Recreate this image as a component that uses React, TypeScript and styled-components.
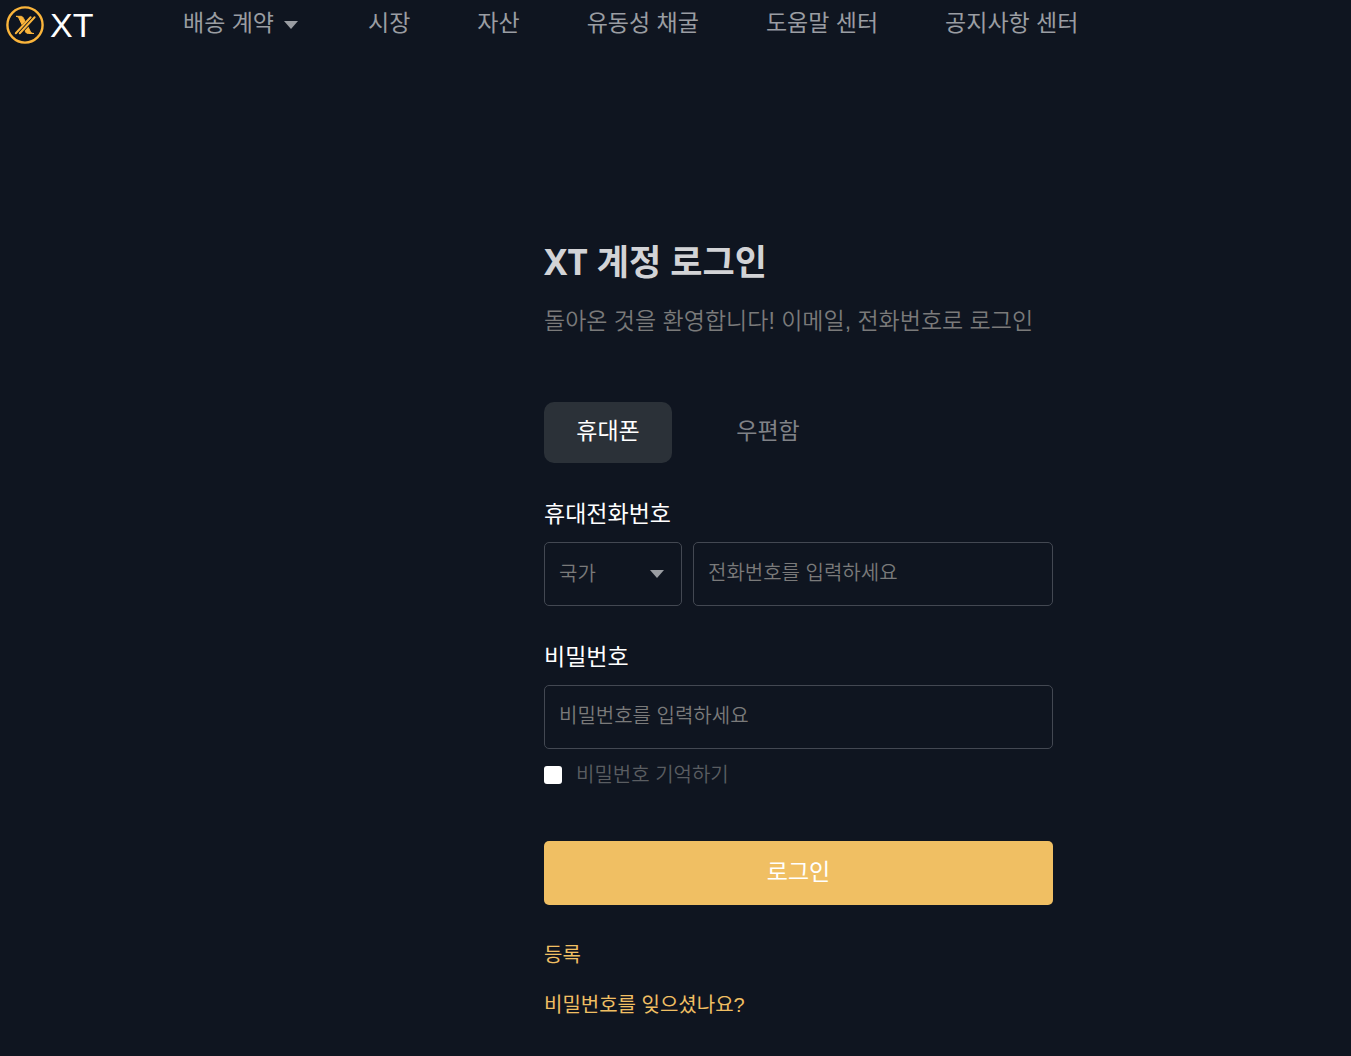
import React from "react";
import styled, { createGlobalStyle } from "styled-components";

const colors = {
  page: "#0f1520",
  gold: "#f0bf63",
  nav: "#9a9da2",
  muted: "#7a7a7a",
  dim: "#5a5d61",
  line: "#434852",
};

const GlobalStyle = createGlobalStyle`
  *, *::before, *::after { box-sizing: border-box; }
  body {
    margin: 0;
    background: ${colors.page};
    color: #fff;
    font-family: "Liberation Sans", "Noto Sans CJK KR", sans-serif;
    font-size: 23px;
    line-height: 32px;
  }
  button, input, select { font: inherit; color: inherit; }
`;

const Header = styled.header`
  display: flex;
  align-items: center;
  height: 48px;
  padding-left: 6px;
`;

const Brand = styled.a`
  display: flex;
  align-items: center;
  gap: 6px;
  flex: 0 0 177px;
  padding-top: 2px;
  color: #fff;
  font-size: 34px;
  line-height: 40px;
  text-decoration: none;
`;

const Nav = styled.nav`
  display: flex;
  gap: 67px;
  padding-bottom: 2px;
  white-space: nowrap;
`;

const NavLink = styled.a`
  color: ${colors.nav};
  text-decoration: none;
`;

const NavMenu = styled.button`
  display: flex;
  align-items: center;
  gap: 10px;
  padding: 0 3px 0 0;
  border: 0;
  background: none;
  color: ${colors.nav};
  cursor: pointer;

  & > svg { margin-top: 4px; }
`;

const Main = styled.main`
  display: grid;
  grid-template-columns: 544px minmax(0, 509px);
  padding: 190px 0 32px;
`;

const Panel = styled.form`
  grid-column: 2;
  display: flex;
  flex-direction: column;
`;

const Title = styled.h1`
  margin: 0;
  color: #d2d3d6;
  font-family: "Noto Sans", "Noto Sans CJK KR", sans-serif;
  font-size: 35px;
  line-height: 48px;
`;

const Intro = styled.p`
  margin: 19px 0 65px;
  color: ${colors.muted};
  font-weight: 350;
  white-space: nowrap;
`;

const Tabs = styled.div`
  display: flex;
  gap: 32px;
  margin-bottom: 35px;
`;

const Tab = styled.button<{ $active?: boolean }>`
  min-width: 128px;
  height: 61px;
  padding: 0 32px 4px;
  border: 0;
  border-radius: 10px;
  background: ${(p) => (p.$active ? "#2b3138" : "transparent")};
  color: ${(p) => (p.$active ? "#fff" : "#808287")};
  cursor: pointer;
`;

const Label = styled.label`
  margin-bottom: 12px;
`;

const Row = styled.div`
  display: flex;
  gap: 11px;
  margin-bottom: 35px;
`;

const SelectBox = styled.div`
  display: grid;
  flex: 0 0 138px;
  align-items: center;

  & > * { grid-area: 1 / 1; }
  & > svg { justify-self: end; margin-right: 18px; pointer-events: none; }
`;

const Select = styled.select`
  appearance: none;
  width: 100%;
  height: 64px;
  padding: 0 14px;
  border: 1px solid ${colors.line};
  border-radius: 5px;
  background: transparent;
  color: ${colors.muted};
  font-size: 20px;
  font-weight: 350;
`;

const Field = styled.input`
  flex: 1;
  width: 100%;
  min-width: 0;
  min-height: 64px;
  padding: 0 14px 2px;
  border: 1px solid ${colors.line};
  border-radius: 5px;
  background: transparent;
  font-size: 20px;
  font-weight: 350;

  &::placeholder { color: ${colors.muted}; opacity: 1; }
`;

const Remember = styled.label`
  display: flex;
  align-items: center;
  gap: 14px;
  margin: 10px 0 50px;
  color: ${colors.dim};
  font-size: 20px;
  font-weight: 350;
`;

const Check = styled.input`
  appearance: none;
  width: 18px;
  height: 18px;
  margin: 0;
  border-radius: 3px;
  background: #fff;

  &:checked { background: ${colors.gold}; }
`;

const Submit = styled.button`
  height: 64px;
  padding: 0 0 2px;
  border: 0;
  border-radius: 5px;
  background: ${colors.gold};
  cursor: pointer;
`;

const Links = styled.div`
  display: flex;
  flex-direction: column;
  align-items: flex-start;
  gap: 18px;
  margin-top: 34px;
`;

const GoldLink = styled.a`
  color: ${colors.gold};
  font-size: 20px;
  text-decoration: none;
`;

const Caret = ({ color }: { color: string }) => (
  <svg width="14" height="8" viewBox="0 0 14 8" aria-hidden="true">
    <path d="M0 0h14L7 8z" fill={color} />
  </svg>
);

const Coin = () => (
  <svg width="38" height="38" viewBox="0 0 38 38" aria-hidden="true">
    <circle cx="19" cy="19" r="17.6" fill="none" stroke="#fbb53b" strokeWidth="2.4" />
    <path
      d="M10 10.300h4.800c1.300 0 2.200.8 2.800 2.100l6.600 12.800c.6 1.200 1.500 2.300 3.800 2.300h-5.600c-1.600 0-2.500-.8-3.100-2.100l-6-12.500c-.6-1.400-1.300-2.300-3.300-2.600z"
      fill="#fbb53b"
      stroke="#fbb53b"
      strokeWidth="1"
      strokeLinejoin="round"
    />
    <path d="M11 28.500 27.500 11" stroke={colors.page} strokeWidth="6" />
    <g fill="none" stroke="#fbb53b" strokeWidth="2" strokeLinecap="round">
      <path d="M9.800 27.200 24.600 11.300" />
      <path d="M13.800 27.200 28.600 11.300" />
    </g>
  </svg>
);

const links = ["시장", "자산", "유동성 채굴", "도움말 센터", "공지사항 센터"];

export default function App() {
  return (
    <>
      <GlobalStyle />
      <Header>
        <Brand href="#">
          <Coin />
          XT
        </Brand>
        <Nav>
          <NavMenu type="button">
            배송 계약
            <Caret color={colors.nav} />
          </NavMenu>
          {links.map((text) => (
            <NavLink href="#" key={text}>
              {text}
            </NavLink>
          ))}
        </Nav>
      </Header>
      <Main>
        <Panel onSubmit={(e) => e.preventDefault()}>
          <Title>XT 계정 로그인</Title>
          <Intro>돌아온 것을 환영합니다! 이메일, 전화번호로 로그인</Intro>
          <Tabs>
            <Tab type="button" $active>
              휴대폰
            </Tab>
            <Tab type="button">우편함</Tab>
          </Tabs>
          <Label htmlFor="phone">휴대전화번호</Label>
          <Row>
            <SelectBox>
              <Select aria-label="국가">
                <option>국가</option>
              </Select>
              <Caret color={colors.nav} />
            </SelectBox>
            <Field id="phone" type="tel" placeholder="전화번호를 입력하세요" />
          </Row>
          <Label htmlFor="password">비밀번호</Label>
          <Field id="password" type="password" placeholder="비밀번호를 입력하세요" />
          <Remember>
            <Check type="checkbox" />
            비밀번호 기억하기
          </Remember>
          <Submit type="submit">로그인</Submit>
          <Links>
            <GoldLink href="#">등록</GoldLink>
            <GoldLink href="#">비밀번호를 잊으셨나요?</GoldLink>
          </Links>
        </Panel>
      </Main>
    </>
  );
}
